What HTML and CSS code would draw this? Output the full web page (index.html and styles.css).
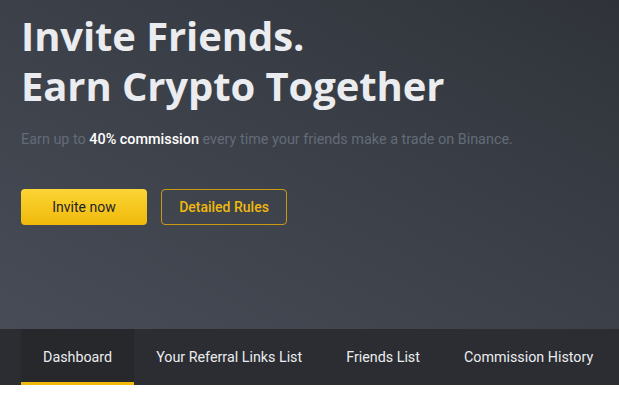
FILE: index.html
```html
<!DOCTYPE html>
<html lang="en">
<head>
<meta charset="utf-8">
<title>Invite Friends</title>
<link rel="stylesheet" href="styles.css">
</head>
<body>
<section class="hero">
  <h1 class="title">Invite Friends.<br>Earn Crypto Together</h1>
  <p class="subtitle">Earn up to <strong>40% commission</strong> every time your friends make a trade on Binance.</p>
  <div class="actions">
    <button class="btn btn-primary">Invite now</button>
    <button class="btn btn-outline">Detailed Rules</button>
  </div>
</section>
<nav class="tabs">
  <a class="tab active">Dashboard</a>
  <a class="tab">Your Referral Links List</a>
  <a class="tab">Friends List</a>
  <a class="tab">Commission History</a>
</nav>
</body>
</html>
```
FILE: styles.css
```css
* { box-sizing: border-box; }
html, body { margin: 0; padding: 0; background: #ffffff; }
body { font-family: Roboto, "Noto Sans", "Liberation Sans", sans-serif; }

.hero {
  height: 329px;
  padding: 11px 21px 0;
  background: linear-gradient(to top right, #474c56 0%, #3c4049 50%, #2f3339 100%);
}
.title {
  margin: 0;
  font-family: "Open Sans", "Noto Sans", sans-serif;
  font-size: 40px;
  line-height: 50px;
  font-weight: 700;
  color: #eaecef;
  letter-spacing: -0.1px;
}
.subtitle {
  margin: 19px 0 0;
  font-size: 14.4px;
  line-height: 20px;
  color: #646b78;
}
.subtitle strong { color: #ffffff; font-weight: 500; }

.actions {
  display: flex;
  gap: 14px;
  margin-top: 39px;
}
.btn {
  width: 126px;
  height: 36px;
  border-radius: 4px;
  font-family: inherit;
  font-size: 14px;
  font-weight: 400;
  cursor: pointer;
}
.btn-primary {
  border: none;
  background: linear-gradient(180deg, #fcd535 0%, #f0b90b 100%);
  color: #1e2329;
}
.btn-outline {
  background: transparent;
  border: 1px solid #c99a10;
  color: #f0b90b;
  font-weight: 500;
}

.tabs {
  display: flex;
  height: 56px;
  padding-left: 21px;
  background: #2b2d32;
}
.tab {
  display: flex;
  align-items: center;
  padding: 2px 22px 0;
  font-size: 14.3px;
  white-space: nowrap;
  color: #eaecef;
  border-bottom: 3px solid transparent;
}
.tab.active {
  background: #26282c;
  border-bottom-color: #f0b90b;
}
```
